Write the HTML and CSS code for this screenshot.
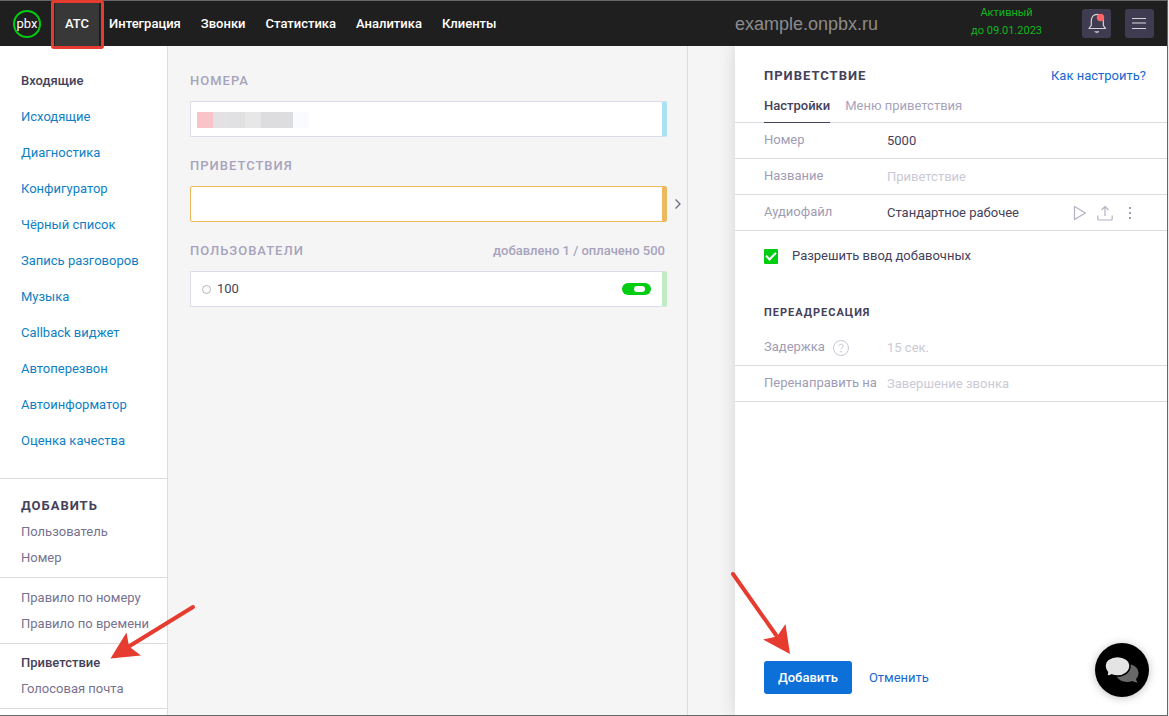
FILE: index.html
```
<!DOCTYPE html>
<html lang="ru">
<head>
<meta charset="utf-8">
<meta name="viewport" content="width=device-width, initial-scale=1">
<title>onpbx — АТС</title>
<link rel="stylesheet" href="styles.css">
</head>
<body>
<div class="app">
  <header class="topbar">
    <a class="logo" href="#" aria-label="pbx"><span class="logo-text">pbx</span></a>
    <nav class="nav">
      <a class="nav-link nav-active" href="#">АТС</a>
      <a class="nav-link" href="#">Интеграция</a>
      <a class="nav-link" href="#">Звонки</a>
      <a class="nav-link" href="#">Статистика</a>
      <a class="nav-link" href="#">Аналитика</a>
      <a class="nav-link" href="#">Клиенты</a>
    </nav>
    <div class="account">
      <span class="domain">example.onpbx.ru</span>
      <div class="status"><span>Активный</span><span>до 09.01.2023</span></div>
      <button class="icon-button" type="button" aria-label="Уведомления">
        <svg width="29" height="29" viewBox="0 0 29 29" fill="none" stroke="#d5d3da" stroke-width="1.2" stroke-linecap="round" stroke-linejoin="round">
          <path d="M7 19.5h16.500l-2.200-3.200V12c0-3.800-2.200-6.700-6-6.700s-6 2.900-6 6.700v4.300z"/>
          <path d="M13 22.500h4l-1.300 1.200h-1.400z" fill="#b4b2bc" stroke-width=".5"/>
          <circle cx="18.500" cy="8.500" r="3.700" fill="#ff6464" stroke="none"/>
        </svg>
      </button>
      <button class="icon-button" type="button" aria-label="Меню">
        <svg width="29" height="29" viewBox="0 0 29 29" stroke="#d5d3da">
          <path d="M7 9.500h14M7 19.500h14"/><path d="M7 14h14" stroke="#8e8a98" stroke-width="2"/>
        </svg>
      </button>
    </div>
  </header>

  <div class="workspace">
    <aside class="sidebar">
      <nav class="menu">
        <a class="menu-link menu-current" href="#">Входящие</a>
        <a class="menu-link" href="#">Исходящие</a>
        <a class="menu-link" href="#">Диагностика</a>
        <a class="menu-link" href="#">Конфигуратор</a>
        <a class="menu-link" href="#">Чёрный список</a>
        <a class="menu-link" href="#">Запись разговоров</a>
        <a class="menu-link" href="#">Музыка</a>
        <a class="menu-link" href="#">Callback виджет</a>
        <a class="menu-link" href="#">Автоперезвон</a>
        <a class="menu-link" href="#">Автоинформатор</a>
        <a class="menu-link" href="#">Оценка качества</a>
      </nav>
      <div class="add-group add-first">
        <h2 class="add-title">ДОБАВИТЬ</h2>
        <a class="add-link" href="#">Пользователь</a>
        <a class="add-link" href="#">Номер</a>
      </div>
      <div class="add-group">
        <a class="add-link" href="#">Правило по номеру</a>
        <a class="add-link" href="#">Правило по времени</a>
      </div>
      <div class="add-group">
        <a class="add-link add-current" href="#">Приветствие</a>
        <a class="add-link" href="#">Голосовая почта</a>
      </div>
      <svg class="arrow arrow-menu" width="90" height="64" viewBox="0 0 90 64">
        <path d="M87 6L22 46" stroke="#e63c30" stroke-width="4" stroke-linecap="round"/>
        <path d="M4.500 57.500L20.500 31.500L23 45.500L35 54.500Z" fill="#e63c30"/>
      </svg>
    </aside>

    <main class="incoming">
      <section class="block">
        <div class="block-head"><h2 class="block-title">НОМЕРА</h2></div>
        <div class="card card-number">
          <div class="masked"><i class="m1"></i><i class="m2"></i><i class="m3"></i><i class="m4"></i><i class="m5"></i><i class="m5"></i><i class="m6"></i></div>
        </div>
      </section>
      <section class="block">
        <div class="block-head"><h2 class="block-title">ПРИВЕТСТВИЯ</h2></div>
        <div class="card card-greeting">
          <svg class="chevron" width="8" height="12" viewBox="0 0 8 12" fill="none" stroke="#6e6a80" stroke-width="1.300"><path d="M1.500 1.500L6 6L1.500 10.500"/></svg>
        </div>
      </section>
      <section class="block">
        <div class="block-head"><h2 class="block-title">ПОЛЬЗОВАТЕЛИ</h2><span class="quota">добавлено 1 / оплачено 500</span></div>
        <div class="card card-user">
          <span class="presence"></span>
          <label class="user-name" for="user-on">100</label>
          <input class="toggle" id="user-on" type="checkbox" checked>
        </div>
      </section>
    </main>

    <form class="panel">
      <div class="panel-head">
        <h1 class="panel-title">ПРИВЕТСТВИЕ</h1>
        <a class="help-link" href="#">Как настроить?</a>
      </div>
      <div class="tabs">
        <button class="tab tab-active" type="button">Настройки</button>
        <button class="tab" type="button">Меню приветствия</button>
      </div>
      <div class="row">
        <label class="label" for="num">Номер</label>
        <input class="field" id="num" type="text" value="5000">
      </div>
      <div class="row">
        <label class="label" for="title">Название</label>
        <input class="field" id="title" type="text" placeholder="Приветствие">
      </div>
      <div class="row">
        <label class="label" for="audio">Аудиофайл</label>
        <input class="field" id="audio" type="text" value="Стандартное рабочее">
        <div class="tools">
          <button class="tool" type="button" aria-label="Прослушать"><svg width="16" height="16" viewBox="0 0 16 16" fill="none" stroke="#b4b1c4" stroke-width="1.200" stroke-linejoin="round"><path d="M2.500 1.500V14.500L13.500 8Z"/></svg></button>
          <button class="tool" type="button" aria-label="Загрузить"><svg width="16" height="16" viewBox="0 0 16 16" fill="none" stroke="#b4b1c4" stroke-width="1.200"><path d="M.8 10.500v3.200q0 1.300 1.300 1.300h11.800q1.300 0 1.300-1.300v-3.200M8 11V1.500M4.500 5L8 1.500L11.500 5"/></svg></button>
          <button class="tool" type="button" aria-label="Ещё"><svg width="16" height="16" viewBox="0 0 16 16" fill="#a09cb4"><path d="M7 2h2v2h-2zM7 7h2v2h-2zM7 12h2v2h-2z"/></svg></button>
        </div>
      </div>
      <div class="option">
        <input class="check" id="ext" type="checkbox" checked>
        <label for="ext">Разрешить ввод добавочных</label>
      </div>
      <h2 class="section-title">ПЕРЕАДРЕСАЦИЯ</h2>
      <div class="row">
        <div class="label-cell">
          <label class="label" for="delay">Задержка</label>
          <svg width="16" height="16" viewBox="0 0 16 16" fill="none" stroke="#c9c7d4"><circle cx="8" cy="8" r="7.500"/><path d="M5.700 6.200C5.700 3.600 10.300 3.600 10.300 6.200C10.300 7.800 8 7.700 8 9.500"/><path d="M8 11v1.300" stroke-width="1.500"/></svg>
        </div>
        <input class="field" id="delay" type="text" placeholder="15 сек.">
      </div>
      <div class="row">
        <label class="label" for="redirect">Перенаправить на</label>
        <input class="field" id="redirect" type="text" placeholder="Завершение звонка">
      </div>
      <div class="actions">
        <button class="submit" type="button">Добавить</button>
        <a class="cancel" href="#">Отменить</a>
        <svg class="arrow arrow-submit" width="70" height="90" viewBox="0 0 70 90">
          <path d="M5 5L48 66" stroke="#e63c30" stroke-width="4" stroke-linecap="round"/>
          <path d="M62 85L35 70.500L49 67.500L57.500 55Z" fill="#e63c30"/>
        </svg>
      </div>
    </form>
  </div>
  <button class="chat" type="button" aria-label="Чат">
    <svg width="54" height="54" viewBox="0 0 54 54">
      <path d="M32 21c7 0 11.500 4 11.500 9 0 2.500-1 4.500-2.500 6 .2 1.500 1 2.600 1.700 3.500-2 .2-3.800-.3-5.300-1.400-6.500 2.200-14.400 0-16.200-6.100z" fill="#686868"/>
      <path d="M22.500 13.500c7 0 12.500 4 12.500 9.500s-5.500 10-12.500 10c-2 0-4-.4-5.700-1.100-1.700 1-3.700 1.400-5.800 1.100 1-1 1.500-2.300 1.500-3.800-1.600-1.700-2.500-3.800-2.500-6.200 0-5.500 5.500-9.500 12.500-9.500z" fill="#e4e4e4" stroke="#000" stroke-width="1.500"/>
    </svg>
  </button>
</div>
</body>
</html>
```
FILE: styles.css
```
* { box-sizing: border-box; }
body {
  margin: 0;
  background: #ececec;
  color: #45415a;
  font: 13px/20px Roboto, "Liberation Sans", sans-serif;
}
a { text-decoration: none; }
button, input { margin: 0; font: inherit; }
button { padding: 0; border: 0; background: none; cursor: pointer; }
h1, h2 { margin: 0; font-size: 13px; letter-spacing: 1px; }
svg { display: block; }

.app {
  position: relative;
  display: flex;
  flex-direction: column;
  min-height: 100vh;
  margin-right: 1px;
  border: solid #66676b;
  border-width: 1px 1px 1px 0;
  background: #f5f5f5;
}

.topbar {
  display: flex;
  align-items: center;
  height: 45px;
  padding: 0 13px;
  background: #1f1f1f;
}
.logo {
  display: flex;
  align-items: center;
  justify-content: center;
  width: 28px;
  height: 28px;
  border: 2px solid #0c1;
  border-radius: 50%;
  color: #fff;
}
.logo-text { line-height: 16px; }
.nav {
  display: flex;
  height: 100%;
  margin-left: 14px;
}
.nav-link {
  display: flex;
  align-items: center;
  padding: 0 10px;
  color: #fff;
  font-weight: 500;
}
.nav-active {
  position: relative;
  z-index: 3;
  background: #383838;
}
.nav-active::after {
  content: "";
  position: absolute;
  inset: -1px -5px -3px -4px;
  border: 3px solid #e63c30;
  border-radius: 3px;
}
.account {
  display: flex;
  align-items: center;
  flex: 0 0 419px;
  margin-left: auto;
}
.domain {
  margin-right: auto;
  color: #8c8c8c;
  font: 18px/20px "Liberation Sans", Arial, sans-serif;
}
.status {
  display: flex;
  flex-direction: column;
  align-items: center;
  margin-right: 40px;
  padding-bottom: 4px;
  color: #0eb81d;
  font-size: 11px;
  line-height: 18px;
}
.icon-button {
  width: 29px;
  height: 29px;
  border-radius: 3px;
  background: #3f3b50;
}
.icon-button + .icon-button { margin-left: 14px; }

.workspace {
  display: grid;
  grid-template-columns: 168px 1fr 479px;
  flex: 1;
}

.sidebar {
  position: relative;
  border-right: 1px solid #dcdbe8;
  background: #fff;
}
.menu {
  display: flex;
  flex-direction: column;
  padding: 17px 21px 19px;
}
.menu-link {
  color: #0d7fc4;
  line-height: 36px;
}
.menu-current { color: #45415a; font-weight: 500; }
.add-group {
  display: flex;
  flex-direction: column;
  padding: 7px 21px 6px;
  border-top: 1px solid #dcdce0;
}
.add-first { padding-top: 14px; }
.add-group:nth-last-of-type(1) { padding: 6px 21px; border-bottom: 1px solid #dcdce0; }
.add-title, .add-link { line-height: 26px; white-space: nowrap; }
.add-link { color: #77728f; }
.add-current { color: #45415a; font-weight: 500; }

.arrow { position: absolute; pointer-events: none; z-index: 2; }
.arrow-menu { left: 106px; top: 555px; }
.arrow-submit { left: -7px; bottom: 56px; }

.incoming {
  display: flex;
  flex-direction: column;
  gap: 19px;
  padding: 25px 20px 0 22px;
  border-right: 1px solid #dcdbe8;
}
.block { display: flex; flex-direction: column; gap: 10px; }
.block-head {
  display: flex;
  justify-content: space-between;
  padding-right: 2px;
  color: #a7a3bc;
  font-weight: 500;
}
.block-title { font-weight: 500; }
.card {
  display: flex;
  align-items: center;
  height: 36px;
  padding: 0 11px 0 6px;
  border: 1px solid #dcdbec;
  border-right-width: 5px;
  border-radius: 2px;
  background: #fff;
}
.card-number { padding-top: 2px; border-right-color: #ade0f4; }
.card-greeting { position: relative; border-color: #edb95f; }
.card-user { padding-left: 11px; border-right-color: #bfecc0; }
.chevron { position: absolute; left: calc(100% + 12px); top: 11px; }
.masked { display: flex; }
.masked i { width: 16px; height: 16px; }
.m1 { background: #f8c4c8; }
.m2 { background: #e3e1e3; }
.m3 { background: #e1e1e4; }
.m4 { background: #e7e7e7; }
.m5 { background: #dddde0; }
.m6 { background: #fafbfe; }
.presence {
  width: 9px;
  height: 9px;
  border: 1px solid #b5b5b5;
  border-radius: 50%;
}
.user-name { margin-left: 6px; }
.toggle {
  display: flex;
  align-items: center;
  justify-content: flex-end;
  width: 29px;
  height: 12px;
  margin-left: auto;
  padding-right: 6px;
  border-radius: 6px;
  background: #0c1;
  appearance: none;
}
.toggle::after {
  content: "";
  width: 11px;
  height: 6px;
  border-radius: 3px;
  background: #fff;
}

.panel {
  display: flex;
  flex-direction: column;
  margin-left: 47px;
  padding-top: 20px;
  background: #fff;
  box-shadow: 0 0 16px rgba(0, 0, 0, .14);
  clip-path: inset(0 0 0 -34px);
}
.panel-head {
  display: flex;
  justify-content: space-between;
  padding: 0 21px 0 29px;
}
.panel-title { line-height: 20px; }
.help-link, .cancel { color: #1668d0; }
.tabs {
  display: flex;
  gap: 15px;
  height: 37px;
  padding-left: 29px;
  border-bottom: 1px solid #dcdce0;
}
.tab {
  height: 37px;
  padding-top: 3px;
  border-bottom: 1px solid transparent;
  color: #a7a3bc;
}
.tab-active { border-bottom-color: #45415a; color: #45415a; font-weight: 500; }
.row {
  display: grid;
  grid-template-columns: 123px 1fr auto;
  align-items: center;
  height: 36px;
  padding: 0 29px;
  border-bottom: 1px solid #dcdce0;
}
.label { padding-bottom: 2px; color: #a09cb5; white-space: nowrap; }
.label-cell { display: flex; align-items: center; gap: 8px; }
.field {
  width: 100%;
  min-width: 0;
  padding: 0;
  border: 0;
  outline: 0;
  background: none;
  color: #45415a;
}
.field::placeholder { color: #cbc9d5; opacity: 1; }
.tools { display: flex; gap: 9px; }
.option {
  display: flex;
  align-items: center;
  gap: 14px;
  padding: 15px 29px;
}
.check {
  display: flex;
  align-items: center;
  justify-content: center;
  width: 14px;
  height: 15px;
  border-radius: 1px;
  background: #0c1;
  appearance: none;
}
.check::after {
  content: "";
  width: 8px;
  height: 4px;
  margin-bottom: 3px;
  border: solid #fff;
  border-width: 0 0 2px 2px;
  transform: rotate(-45deg);
}
.section-title { padding: 22px 29px 7px; font-size: 11px; }
.actions {
  position: relative;
  display: flex;
  align-items: center;
  gap: 17px;
  margin-top: auto;
  padding: 20px 29px 21px;
}
.submit {
  height: 33px;
  padding: 0 14px;
  border-radius: 3px;
  background: #0d6fd8;
  color: #fff;
  font-weight: 500;
}
.chat {
  position: absolute;
  right: 18px;
  bottom: 18px;
  width: 54px;
  height: 54px;
  border-radius: 50%;
  background: #000;
  box-shadow: 0 1px 8px rgba(0, 0, 0, .25);
}
```
